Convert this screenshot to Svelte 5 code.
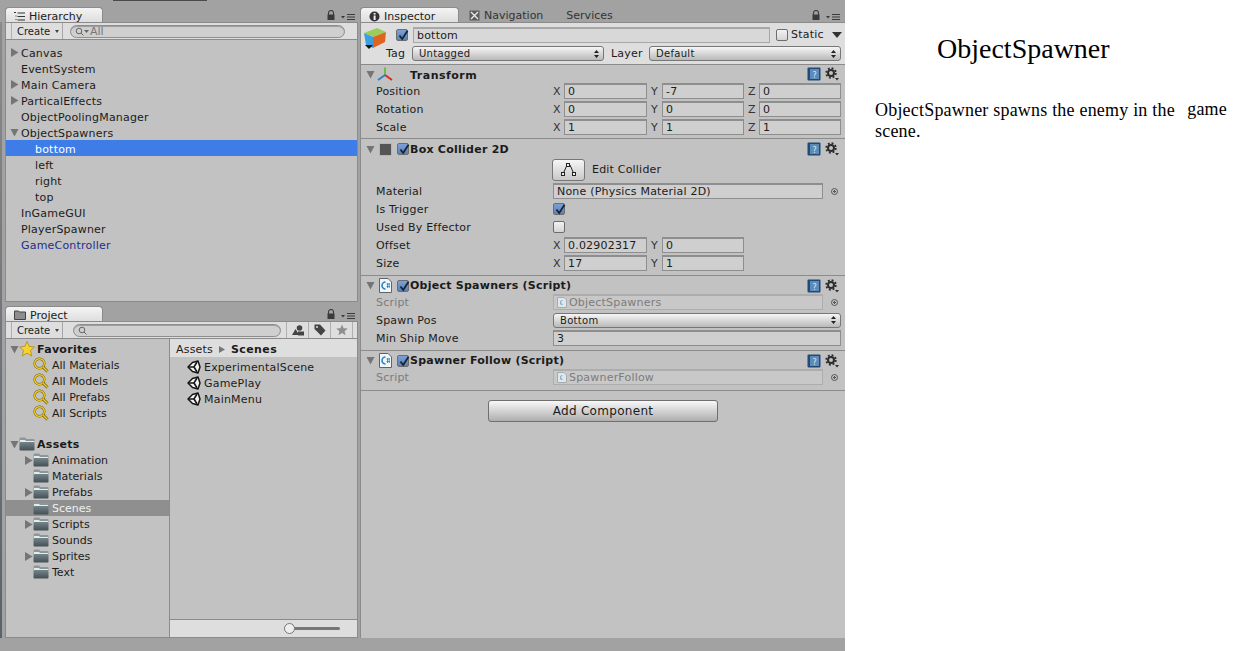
<script>
  let tree = [
    { name: 'Canvas', arrow: 'right' },
    { name: 'EventSystem' },
    { name: 'Main Camera', arrow: 'right' },
    { name: 'ParticalEffects', arrow: 'right' },
    { name: 'ObjectPoolingManager' },
    { name: 'ObjectSpawners', arrow: 'down' },
    { name: 'bottom', child: true, selected: true },
    { name: 'left', child: true },
    { name: 'right', child: true },
    { name: 'top', child: true },
    { name: 'InGameGUI' },
    { name: 'PlayerSpawner' },
    { name: 'GameController', prefab: true },
  ];

  let searches = ['All Materials', 'All Models', 'All Prefabs', 'All Scripts'];

  let folders = [
    { name: 'Animation', arrow: true },
    { name: 'Materials' },
    { name: 'Prefabs', arrow: true },
    { name: 'Scenes', selected: true },
    { name: 'Scripts', arrow: true },
    { name: 'Sounds' },
    { name: 'Sprites', arrow: true },
    { name: 'Text' },
  ];

  let scenes = ['ExperimentalScene', 'GamePlay', 'MainMenu'];

  let transform = [
    { label: 'Position', x: '0', y: '-7', z: '0' },
    { label: 'Rotation', x: '0', y: '0', z: '0' },
    { label: 'Scale', x: '1', y: '1', z: '1' },
  ];
</script>

{#snippet arrow(dir)}
  <svg class="arrow" width="9" height="9" viewBox="0 0 9 9">
    {#if dir === 'right'}
      <path d="M1 0 L8.5 4.5 L1 9 Z" fill="#757575" />
    {:else if dir === 'down'}
      <path d="M0.5 1 L8.5 1 L4.5 8.5 Z" fill="#757575" />
    {/if}
  </svg>
{/snippet}

{#snippet lockMenu()}
  <div class="lock-menu">
    <svg width="8" height="10" viewBox="0 0 8 10">
      <path d="M1.5 5 V3 A2.5 2.5 0 0 1 6.5 3 V5" fill="none" stroke="#3a3a3a" stroke-width="1.1" />
      <rect x="0.5" y="4.5" width="7" height="5.5" fill="#3a3a3a" />
    </svg>
    <svg width="14" height="6" viewBox="0 0 14 6">
      <path d="M0 2 H4 L2 4.5 Z" fill="#3a3a3a" />
      <path d="M6 0.5 H14 M6 3 H14 M6 5.5 H14" stroke="#3a3a3a" stroke-width="1" />
    </svg>
  </div>
{/snippet}

{#snippet checkbox(on)}
  <span class="check" class:on>
    {#if on}
      <svg width="12" height="12" viewBox="0 0 12 12">
        <path d="M2.5 5.5 L5.2 9 L10.5 0.8" fill="none" stroke="#16243a" stroke-width="1.8" />
      </svg>
    {/if}
  </span>
{/snippet}

{#snippet updown()}
  <svg width="5" height="8" viewBox="0 0 5 8">
    <path d="M0 3 L2.5 0 L5 3 Z M0 5 L5 5 L2.5 8 Z" fill="#222" />
  </svg>
{/snippet}

{#snippet helpGear()}
  <div class="help-gear">
    <svg width="14" height="14" viewBox="0 0 14 14">
      <rect x="0.5" y="0.5" width="13" height="13" rx="1" fill="#234a74" />
      <rect x="3" y="2" width="9" height="10" fill="#5b8bb8" />
      <text x="7.5" y="10.5" text-anchor="middle" font-size="8" font-family="DejaVu Sans" fill="#dfeaf5">?</text>
    </svg>
    <svg width="14" height="14" viewBox="0 0 14 14">
      <circle cx="6" cy="6" r="3" fill="none" stroke="#2c2c2c" stroke-width="2" />
      <circle cx="6" cy="6" r="4.8" fill="none" stroke="#2c2c2c" stroke-width="1.8" stroke-dasharray="1.9 1.87" />
      <path d="M10 11 H14 L12 13.5 Z" fill="#2c2c2c" />
    </svg>
  </div>
{/snippet}

{#snippet scriptIcon()}
  <svg class="comp-icon" width="13" height="15" viewBox="0 0 13 15">
    <path d="M0.5 0.5 H9 L12.5 4 V14.5 H0.5 Z" fill="#f2f6f8" stroke="#5c6468" />
    <path d="M6.5 4 A3.5 3.5 0 1 0 6.5 11" fill="none" stroke="#2a83c4" stroke-width="1.6" />
    <path d="M7.5 6 H11 M7.5 8.5 H11 M8.5 5 V10 M10.2 5 V10" stroke="#2a83c4" stroke-width="0.8" />
  </svg>
{/snippet}

{#snippet scriptRef(name)}
  <div class="row">
    <span class="label dim">Script</span>
    <div class="field ref">
      <svg width="10" height="11" viewBox="0 0 10 11">
        <path d="M0.5 0.5 H7 L9.5 3 V10.5 H0.5 Z" fill="#dfe7ea" stroke="#a6adb0" />
        <path d="M5.5 3.5 A2 2 0 1 0 5.5 7.5" fill="none" stroke="#7fb0d0" stroke-width="1.2" />
      </svg>
      {name}
    </div>
    <span class="picker"></span>
  </div>
{/snippet}

{#snippet magnifier()}
  <svg class="icon16" width="16" height="16" viewBox="0 0 16 16">
    <circle cx="6.5" cy="6.5" r="4.8" fill="none" stroke="#6b5600" stroke-width="2.4" />
    <circle cx="6.5" cy="6.5" r="4.8" fill="none" stroke="#f5d021" stroke-width="1.4" />
    <path d="M10 10 L14.5 14.5" stroke="#6b5600" stroke-width="2.8" />
    <path d="M10 10 L14.5 14.5" stroke="#f5d021" stroke-width="1.4" />
  </svg>
{/snippet}

{#snippet folder()}
  <svg class="icon16" width="16" height="14" viewBox="0 0 16 14">
    <defs>
      <linearGradient id="folder-body" x1="0" y1="0" x2="0" y2="1">
        <stop offset="0" stop-color="#74858a" />
        <stop offset="1" stop-color="#434f54" />
      </linearGradient>
    </defs>
    <path d="M0.5 2 Q0.5 0.5 1.5 0.5 H6 L7.5 2 H14.5 Q15.5 2 15.5 3 V5 H0.5 Z" fill="#8b979b" />
    <path d="M1 3 H6 L7 4 H15 V5 H1 Z" fill="#e6eaeb" />
    <rect x="0.5" y="5" width="15" height="8.5" rx="1" fill="url(#folder-body)" />
  </svg>
{/snippet}

{#snippet unityIcon()}
  <svg class="scene-icon" width="14" height="14" viewBox="0 0 14 14">
    <path d="M1 7 L5.5 2.5 L11 1 L13 7 L11 13 L5.5 11.5 Z" fill="#f4f4f4" stroke="#151515" stroke-width="1.5" stroke-linejoin="round" />
    <path d="M2 7 H7 L10 2 M7 7 L10 12" fill="none" stroke="#151515" stroke-width="1.6" />
  </svg>
{/snippet}

<div class="page">
  <div class="editor">
    <div class="strip"><div class="strip-mark"></div></div>
    <div class="columns">
      <div class="edge"></div>
      <div class="left-col">
        <div class="tab-row">
          <div class="tab">
            <svg width="11" height="9" viewBox="0 0 11 9">
              <path d="M0 0.5 H2 M3.5 1 H11 M1.5 4 H2.5 M3.5 4.5 H11 M1.5 7.5 H2.5 M3.5 8 H11" stroke="#333" stroke-width="1" />
            </svg>
            Hierarchy
          </div>
          {@render lockMenu()}
        </div>
        <div class="panel hierarchy">
          <div class="toolbar">
            <div class="create">Create <span class="caret"></span></div>
            <div class="search">
              <svg width="15" height="9" viewBox="0 0 15 9">
                <circle cx="4" cy="4" r="2.8" fill="none" stroke="#666" />
                <path d="M6 6 L8.5 8.5" stroke="#666" />
                <path d="M9 3 H14 L11.5 6 Z" fill="#666" />
              </svg>
              <span>All</span>
            </div>
          </div>
          <div class="tree">
            {#each tree as item}
              <div class="tree-row" class:child={item.child} class:selected={item.selected} class:prefab={item.prefab}>
                {@render arrow(item.arrow)}
                <span>{item.name}</span>
              </div>
            {/each}
          </div>
        </div>

        <div class="tab-row project-tabs">
          <div class="tab">
            <svg width="12" height="10" viewBox="0 0 12 10">
              <path d="M0.5 9.5 V1 H4.5 L5.5 2 H11.5 V9.5 Z" fill="#8d8d8d" stroke="#444" />
            </svg>
            Project
          </div>
          {@render lockMenu()}
        </div>
        <div class="panel project">
          <div class="toolbar">
            <div class="create">Create <span class="caret"></span></div>
            <div class="search wide">
              <svg width="9" height="9" viewBox="0 0 9 9">
                <circle cx="4" cy="4" r="2.8" fill="none" stroke="#666" />
                <path d="M6 6 L8.5 8.5" stroke="#666" />
              </svg>
            </div>
            <div class="tool">
              <svg width="12" height="11" viewBox="0 0 12 11">
                <path d="M0 10 L3.5 4 L6 8 V10 Z" fill="#444" />
                <circle cx="7.5" cy="3" r="2.8" fill="#444" />
                <rect x="6" y="6.5" width="6" height="4" fill="#444" />
              </svg>
            </div>
            <div class="tool">
              <svg width="12" height="12" viewBox="0 0 12 12">
                <path d="M0.5 0.5 H6 L11.5 6.5 L7 11.5 L0.5 5 Z" fill="#444" />
                <circle cx="3" cy="3" r="1" fill="#dedede" />
              </svg>
            </div>
            <div class="tool">
              <svg width="12" height="12" viewBox="0 0 12 12">
                <path d="M6 0.5 L7.6 4.3 L11.7 4.6 L8.6 7.2 L9.6 11.3 L6 9.1 L2.4 11.3 L3.4 7.2 L0.3 4.6 L4.4 4.3 Z" fill="#8e8e8e" />
              </svg>
            </div>
          </div>
          <div class="project-body">
            <div class="folders">
              <div class="folder-row root">
                {@render arrow('down')}
                <svg class="icon16" width="16" height="16" viewBox="0 0 16 16">
                  <path d="M8 0.5 L10.2 5.4 L15.5 6 L11.5 9.5 L12.7 15 L8 12.2 L3.3 15 L4.5 9.5 L0.5 6 L5.8 5.4 Z" fill="#f8d12b" stroke="#a58415" stroke-width="0.7" />
                </svg>
                <b>Favorites</b>
              </div>
              {#each searches as name}
                <div class="folder-row sub search-row">
                  {@render magnifier()}
                  <span>{name}</span>
                </div>
              {/each}
              <div class="folder-row root assets">
                {@render arrow('down')}
                {@render folder()}
                <b>Assets</b>
              </div>
              {#each folders as f}
                <div class="folder-row sub" class:selected={f.selected}>
                  {#if f.arrow}{@render arrow('right')}{:else}<span class="arrow-gap"></span>{/if}
                  {@render folder()}
                  <span>{f.name}</span>
                </div>
              {/each}
            </div>
            <div class="files">
              <div class="crumbs">
                Assets
                <svg width="6" height="7" viewBox="0 0 6 7"><path d="M0 0 L6 3.5 L0 7 Z" fill="#777" /></svg>
                <b>Scenes</b>
              </div>
              <div class="file-list">
                {#each scenes as scene}
                  <div class="file-row">
                    {@render unityIcon()}
                    <span>{scene}</span>
                  </div>
                {/each}
              </div>
              <div class="slider-bar">
                <div class="slider"><span class="knob"></span></div>
              </div>
            </div>
          </div>
        </div>
      </div>

      <div class="inspector-col">
        <div class="tab-row inspector-tabs">
          <div class="tab">
            <svg width="11" height="11" viewBox="0 0 11 11">
              <circle cx="5.5" cy="5.5" r="5" fill="#333" />
              <rect x="4.6" y="4.5" width="2" height="4.5" fill="#eee" />
              <rect x="4.6" y="2" width="2" height="1.6" fill="#eee" />
            </svg>
            Inspector
          </div>
          <div class="back-tab nav">
            <svg width="11" height="11" viewBox="0 0 11 11">
              <rect x="0.5" y="0.5" width="10" height="10" fill="#5c5c5c" />
              <path d="M2 2 L9 9 M9 2 L2 9" stroke="#e8e8e8" stroke-width="1.4" />
            </svg>
            Navigation
          </div>
          <div class="back-tab">Services</div>
          {@render lockMenu()}
        </div>
        <div class="inspector">
          <div class="object-head">
            <svg class="cube" width="24" height="24" viewBox="0 0 24 24">
              <path d="M1 6 L14 1 L23 5 L10 10 Z" fill="#9ccc5a" />
              <path d="M1 6 L10 10 L10 21 L3 18 Z" fill="#3a9ee0" />
              <path d="M10 10 L23 5 L22 15 L10 21 Z" fill="#e0641e" />
              <path d="M2 18 H10 L6 22 Z" fill="#111" />
            </svg>
            <div class="object-rows">
              <div class="object-line">
                {@render checkbox(true)}
                <div class="field name">bottom</div>
                {@render checkbox(false)}
                <span class="static">Static</span>
                <svg width="10" height="6" viewBox="0 0 10 6"><path d="M0 0 H10 L5 6 Z" fill="#333" /></svg>
              </div>
              <div class="object-line second">
                <span class="tag-label">Tag</span>
                <div class="dropdown tag">Untagged {@render updown()}</div>
                <span class="layer-label">Layer</span>
                <div class="dropdown layer">Default {@render updown()}</div>
              </div>
            </div>
          </div>

          <section class="transform">
            <div class="comp-head first">
              {@render arrow('down')}
              <svg class="comp-icon axes" width="16" height="15" viewBox="0 0 16 15">
                <path d="M8 8 V0.5" stroke="#5fb52a" stroke-width="1.6" />
                <path d="M8 8 L1 13" stroke="#2a7fd0" stroke-width="1.8" />
                <path d="M8 8 L15 13" stroke="#d8281c" stroke-width="1.8" />
              </svg>
              <b class="comp-title transform-title">Transform</b>
              {@render helpGear()}
            </div>
            {#each transform as t}
              <div class="row">
                <span class="label">{t.label}</span>
                <div class="xyz">
                  <span>X</span><div class="field">{t.x}</div>
                  <span>Y</span><div class="field">{t.y}</div>
                  <span>Z</span><div class="field">{t.z}</div>
                </div>
              </div>
            {/each}
          </section>

          <section class="collider">
            <div class="comp-head tall">
              {@render arrow('down')}
              <span class="collider-icon"></span>
              {@render checkbox(true)}
              <b class="comp-title">Box Collider 2D</b>
              {@render helpGear()}
            </div>
            <div class="edit-row">
              <div class="edit-btn">
                <svg width="15" height="13" viewBox="0 0 15 13">
                  <path d="M2.5 10 L6 2 H9 L12.5 10" fill="none" stroke="#222" stroke-width="1" />
                  <rect x="0.5" y="9.5" width="3" height="3" fill="#eee" stroke="#222" />
                  <rect x="5.5" y="0.5" width="3" height="3" fill="#eee" stroke="#222" />
                  <rect x="11.5" y="9.5" width="3" height="3" fill="#eee" stroke="#222" />
                </svg>
              </div>
              <span>Edit Collider</span>
            </div>
            <div class="row">
              <span class="label">Material</span>
              <div class="field ref plain">None (Physics Material 2D)</div>
              <span class="picker"></span>
            </div>
            <div class="row">
              <span class="label">Is Trigger</span>
              {@render checkbox(true)}
            </div>
            <div class="row">
              <span class="label">Used By Effector</span>
              {@render checkbox(false)}
            </div>
            <div class="row">
              <span class="label">Offset</span>
              <div class="xy">
                <span>X</span><div class="field">0.02902317</div>
                <span>Y</span><div class="field">0</div>
              </div>
            </div>
            <div class="row">
              <span class="label">Size</span>
              <div class="xy">
                <span>X</span><div class="field">17</div>
                <span>Y</span><div class="field">1</div>
              </div>
            </div>
          </section>

          <section class="spawners">
            <div class="comp-head">
              {@render arrow('down')}
              {@render scriptIcon()}
              {@render checkbox(true)}
              <b class="comp-title">Object Spawners (Script)</b>
              {@render helpGear()}
            </div>
            {@render scriptRef('ObjectSpawners')}
            <div class="row">
              <span class="label">Spawn Pos</span>
              <div class="dropdown full">Bottom {@render updown()}</div>
            </div>
            <div class="row">
              <span class="label">Min Ship Move</span>
              <div class="field full">3</div>
            </div>
          </section>

          <section class="follow">
            <div class="comp-head">
              {@render arrow('down')}
              {@render scriptIcon()}
              {@render checkbox(true)}
              <b class="comp-title">Spawner Follow (Script)</b>
              {@render helpGear()}
            </div>
            {@render scriptRef('SpawnerFollow')}
          </section>

          <div class="add-wrap">
            <div class="add-btn">Add Component</div>
          </div>
        </div>
      </div>
    </div>
  </div>

  <div class="doc">
    <h1>ObjectSpawner</h1>
    <p>ObjectSpawner spawns the enemy in the&nbsp; <span class="game">game</span> scene.</p>
  </div>
</div>

<style>
  :global(body) {
    background: #fff;
  }

  .page {
    display: flex;
    width: 1239px;
    height: 651px;
    overflow: hidden;
    font-family: "DejaVu Sans", sans-serif;
    font-size: 11px;
    color: #1b1b1b;
  }

  svg {
    flex: none;
    display: block;
  }

  .editor {
    width: 845px;
    flex: none;
    background: #a2a2a2;
  }

  .strip {
    height: 7px;
  }

  .strip-mark {
    width: 94px;
    height: 1px;
    margin-left: 113px;
    background: #4a4a4a;
  }

  .columns {
    display: flex;
    height: 631px;
  }

  .edge {
    width: 2px;
    height: 616px;
    margin-top: 15px;
    flex: none;
    background: linear-gradient(#8a8a8a, #5a636c);
  }

  .left-col {
    width: 353px;
    margin-left: 3px;
  }

  .inspector-col {
    width: 485px;
    margin-left: 2px;
  }

  .tab-row {
    display: flex;
    align-items: flex-end;
    height: 15px;
  }

  .project-tabs {
    margin-top: 4px;
  }

  .tab {
    display: flex;
    align-items: center;
    gap: 4px;
    width: 98px;
    height: 15px;
    box-sizing: border-box;
    padding: 2px 0 0 8px;
    background: linear-gradient(#f4f4f4, #dedede);
    border: 1px solid #8b8b8b;
    border-bottom: none;
    border-radius: 4px 4px 0 0;
  }

  .inspector-tabs .tab {
    width: 99px;
    padding-left: 8px;
    margin-right: 10px;
  }

  .back-tab {
    display: flex;
    align-items: center;
    gap: 4px;
    height: 15px;
    box-sizing: border-box;
    padding-top: 2px;
    color: #333;
  }

  .nav {
    margin-right: 23px;
  }

  .lock-menu {
    display: flex;
    align-items: flex-end;
    gap: 6px;
    margin-left: auto;
    padding: 0 3px 2px 0;
  }

  .inspector-tabs .lock-menu {
    padding-right: 5px;
  }

  .panel {
    box-sizing: border-box;
    border: 1px solid #8b8b8b;
    background: #c2c2c2;
  }

  .hierarchy {
    height: 280px;
  }

  .project {
    height: 317px;
    display: flex;
    flex-direction: column;
  }

  .toolbar {
    display: flex;
    align-items: center;
    height: 16px;
    background: #dedede;
    border-bottom: 1px solid #8b8b8b;
  }

  .create {
    display: flex;
    align-items: center;
    gap: 5px;
    width: 52px;
    height: 16px;
    box-sizing: border-box;
    padding-left: 5px;
    border-left: 1px solid #b0b0b0;
    border-right: 1px solid #a8a8a8;
    margin-left: 5px;
    font-size: 10px;
  }

  .project .create {
    padding-top: 1px;
  }

  .caret {
    width: 0;
    height: 0;
    border-left: 2.5px solid transparent;
    border-right: 2.5px solid transparent;
    border-top: 3px solid #444;
  }

  .search {
    display: flex;
    align-items: center;
    gap: 0;
    width: 269px;
    height: 11px;
    margin-left: 7px;
    padding-left: 4px;
    border: 1px solid #8e8e8e;
    border-radius: 7px;
    background: #cfcfcf;
    color: #777;
    box-shadow: inset 0 1px 0 #9e9e9e;
  }

  .search.wide {
    width: 202px;
    margin-left: 10px;
  }

  .tool {
    display: flex;
    align-items: center;
    justify-content: center;
    width: 21px;
    height: 16px;
    border-right: 1px solid #b0b0b0;
  }

  .search.wide + .tool {
    margin-left: 5px;
    border-left: 1px solid #b0b0b0;
  }

  .tree {
    padding-top: 4px;
  }

  .tree-row {
    display: flex;
    align-items: center;
    gap: 2px;
    height: 16px;
    padding-left: 4px;
    letter-spacing: 0.2px;
  }

  .tree-row span {
    padding-top: 2px;
  }

  .tree-row.child span {
    margin-left: 14px;
  }

  .tree-row.selected {
    background: #3e7de7;
    color: #fff;
  }

  .tree-row.prefab {
    color: #1d2f8a;
  }

  .arrow {
    width: 9px;
    height: 9px;
  }

  .project-body {
    display: flex;
    flex: 1;
    min-height: 0;
  }

  .folders {
    width: 164px;
    flex: none;
    box-sizing: border-box;
    padding-top: 2px;
    border-right: 1px solid #8b8b8b;
  }

  .folder-row {
    display: flex;
    align-items: center;
    height: 16px;
  }

  .folder-row.root {
    padding-left: 4px;
  }

  .folder-row.root b {
    margin-left: 2px;
    letter-spacing: 0.3px;
  }

  .folder-row.assets {
    margin-top: 15px;
  }

  .folder-row.sub {
    padding-left: 18px;
  }

  .folder-row.sub .arrow,
  .arrow-gap {
    width: 9px;
    flex: none;
  }

  .folder-row.sub .icon16 {
    margin-right: 3px;
  }

  .folder-row.search-row {
    padding-left: 27px;
  }

  .folder-row.selected {
    background: #8f8f8f;
    color: #f0f0f0;
  }

  .files {
    flex: 1;
    display: flex;
    flex-direction: column;
  }

  .crumbs {
    display: flex;
    align-items: center;
    gap: 6px;
    height: 18px;
    box-sizing: border-box;
    padding: 2px 0 0 6px;
    background: #dedede;
    letter-spacing: 0.2px;
  }

  .crumbs b {
    letter-spacing: 0.4px;
  }

  .file-list {
    flex: 1;
    padding-top: 2px;
  }

  .file-row {
    display: flex;
    align-items: center;
    gap: 3px;
    height: 16px;
    padding-left: 17px;
    letter-spacing: 0.2px;
  }

  .slider-bar {
    display: flex;
    align-items: center;
    height: 17px;
    padding-left: 114px;
    background: #dedede;
    border-top: 1px solid #8b8b8b;
  }

  .slider {
    display: flex;
    align-items: center;
    width: 56px;
    height: 3px;
    border-radius: 2px;
    background: #777;
  }

  .knob {
    width: 9px;
    height: 9px;
    border: 1px solid #777;
    border-radius: 50%;
    background: #eee;
  }

  .inspector {
    height: 616px;
    box-sizing: border-box;
    border-top: 1px solid #8b8b8b;
    border-left: 1px solid #8b8b8b;
    background: #c2c2c2;
  }

  .object-head {
    display: flex;
    height: 42px;
    box-sizing: border-box;
    padding: 4px 0 0 2px;
    background: #dedede;
    border-bottom: 1px solid #8b8b8b;
  }

  .cube {
    margin-right: 9px;
  }

  .object-rows {
    flex: 1;
    display: flex;
    flex-direction: column;
    gap: 3px;
  }

  .object-line {
    display: flex;
    align-items: center;
    height: 16px;
  }

  .object-line.second {
    margin-left: -10px;
    height: 15px;
  }

  .field {
    height: 16px;
    box-sizing: border-box;
    padding-left: 3px;
    border: 1px solid #8e8e8e;
    border-top-width: 2px;
    line-height: 13px;
    background: #cfcfcf;
    white-space: nowrap;
    letter-spacing: 0.2px;
  }

  .field.name {
    width: 357px;
    margin: 0 6px 0 5px;
    background: #d8d8d8;
    border-color: #a8a8a8;
  }

  .static {
    margin: 0 8px 2px 3px;
    letter-spacing: 0.2px;
  }

  .check {
    display: inline-block;
    flex: none;
    box-sizing: border-box;
    width: 12px;
    height: 12px;
    border: 1px solid #6d6d6d;
    border-radius: 2px;
    background: linear-gradient(#f2f2f2, #d4d4d4);
  }

  .check.on {
    background: linear-gradient(#7da0d4, #5b80b8);
  }

  .dropdown {
    display: flex;
    align-items: center;
    justify-content: space-between;
    box-sizing: border-box;
    height: 15px;
    padding: 0 4px 0 6px;
    font-size: 10px;
    letter-spacing: 0.3px;
    border: 1px solid #777;
    border-radius: 3px;
    background: linear-gradient(#f6f6f6, #b9b9b9);
  }

  .tag-label {
    width: 26px;
    letter-spacing: 0.2px;
  }

  .dropdown.tag {
    width: 192px;
  }

  .layer-label {
    width: 38px;
    margin-left: 7px;
    letter-spacing: 0.2px;
  }

  .dropdown.layer {
    width: 192px;
  }

  .dropdown.full,
  .field.full {
    width: 288px;
  }

  section {
    border-bottom: 1px solid #8b8b8b;
  }

  .transform {
    padding-bottom: 2px;
  }

  .collider {
    padding-bottom: 3px;
  }

  .spawners {
    padding-bottom: 3px;
  }

  .follow {
    padding-bottom: 4px;
  }

  .comp-head {
    display: flex;
    align-items: center;
    height: 18px;
    margin-bottom: -1px;
    padding: 1px 6px 0 5px;
    box-sizing: border-box;
  }

  .comp-head.first {
    height: 17px;
    margin-bottom: 0;
  }

  .comp-head.tall {
    height: 19px;
    margin-bottom: 0;
  }

  .comp-icon {
    margin-left: 4px;
    margin-right: 5px;
  }

  .axes {
    margin-left: 2px;
    margin-right: 19px;
  }

  .collider-icon {
    box-sizing: border-box;
    width: 13px;
    height: 13px;
    margin: 0 5px 0 4px;
    background: #555;
    border: 1px solid #a4dc1e;
  }

  .comp-title {
    margin-left: 1px;
    letter-spacing: 0.25px;
  }

  .transform-title {
    margin-left: -2px;
    padding-top: 2px;
    letter-spacing: 0.5px;
  }

  .help-gear {
    display: flex;
    align-items: center;
    gap: 4px;
    margin-left: auto;
  }

  .row {
    display: flex;
    align-items: center;
    height: 18px;
    padding-left: 15px;
  }

  .label {
    width: 177px;
    flex: none;
    letter-spacing: 0.2px;
  }

  .dim {
    color: #7c7c7c;
  }

  .xyz {
    display: grid;
    grid-template-columns: 11px 83px 15px 82px 15px 82px;
    align-items: center;
    color: #333;
  }

  .xy {
    display: grid;
    grid-template-columns: 11px 83px 15px 82px;
    align-items: center;
    color: #333;
  }

  .field + span {
    padding-left: 4px;
  }

  .xyz .field,
  .xy .field {
    color: #1b1b1b;
  }

  .field.ref {
    display: flex;
    align-items: center;
    gap: 2px;
    width: 270px;
    color: #7c7c7c;
    background: #c8c8c8;
    border-color: #adadad;
  }

  .field.ref.plain {
    color: #1b1b1b;
    background: #cfcfcf;
    border-color: #8e8e8e;
  }

  .picker {
    width: 7px;
    height: 7px;
    box-sizing: border-box;
    margin-left: 8px;
    border: 1px solid #555;
    border-radius: 50%;
    background: radial-gradient(circle, #555 0 1px, transparent 1.2px);
  }

  .edit-row {
    display: flex;
    align-items: center;
    gap: 7px;
    height: 23px;
    padding-left: 191px;
    margin-bottom: 1px;
    letter-spacing: 0.2px;
  }

  .edit-btn {
    display: flex;
    align-items: center;
    justify-content: center;
    box-sizing: border-box;
    width: 33px;
    height: 22px;
    border: 1px solid #777;
    border-radius: 3px;
    background: linear-gradient(#f6f6f6, #c8c8c8);
  }

  .add-wrap {
    display: flex;
    justify-content: center;
    padding-top: 9px;
  }

  .add-btn {
    display: flex;
    align-items: center;
    justify-content: center;
    box-sizing: border-box;
    width: 230px;
    height: 22px;
    font-size: 12px;
    border: 1px solid #6f6f6f;
    border-radius: 3px;
    background: linear-gradient(#f8f8f8, #aeaeae);
    letter-spacing: 0.3px;
  }

  .doc {
    flex: 1;
    padding-left: 30px;
    font-family: "Liberation Serif", serif;
    color: #000;
  }

  h1 {
    margin: 33px 0 0;
    padding-left: 62px;
    font-size: 28px;
    font-weight: 400;
    line-height: 31px;
  }

  p {
    width: 352px;
    margin: 35px 0 0;
    font-size: 18px;
    line-height: 21px;
    letter-spacing: 0.2px;
  }

  .game {
    margin-left: 3px;
    vertical-align: 1px;
  }
</style>
